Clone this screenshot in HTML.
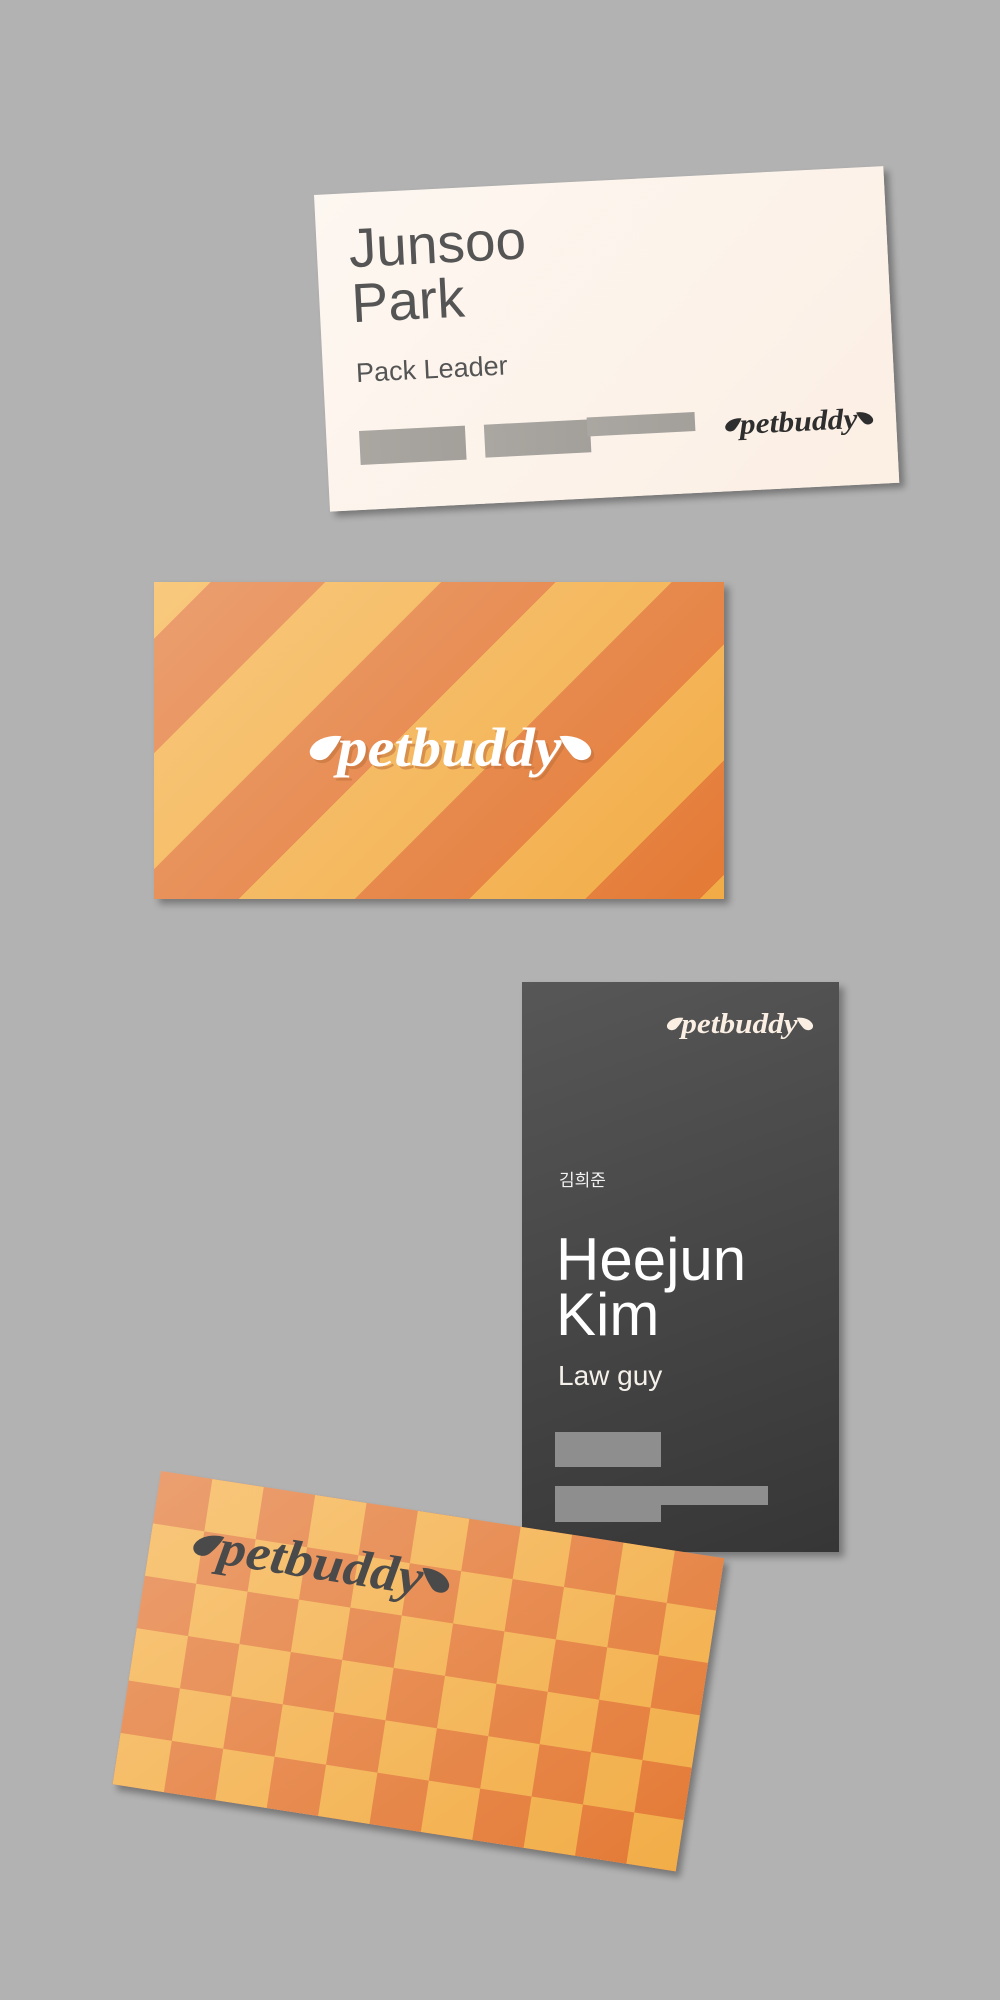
<!DOCTYPE html>
<html><head><meta charset="utf-8"><style>
html,body{margin:0;padding:0}
body{width:1000px;height:2000px;background:#b2b2b2;position:relative;overflow:hidden;font-family:"Liberation Sans","Noto Sans CJK KR",sans-serif}
.card{position:absolute;width:570px;height:317px;box-shadow:5px 5px 7px rgba(0,0,0,.33);transform-origin:0 0;overflow:hidden}
.c1{left:314px;top:195px;transform:rotate(-2.9deg);background:linear-gradient(135deg,#fdf7f1,#fcefe4)}
.c1 .name{position:absolute;left:32px;top:28px;font-size:55px;line-height:55px;color:#555;letter-spacing:0px}
.c1 .role{position:absolute;left:33px;top:165px;font-size:27px;color:#555}
.bar{position:absolute;background:linear-gradient(90deg,#aaa6a1,#a39f9a)}
.c2{left:154px;top:582px;background:linear-gradient(135deg,#f8c97e,#f2ab46)}
.layer{position:absolute;inset:0}
.c2 .dark{background:linear-gradient(135deg,#eb9f70,#e47a35);
 -webkit-mask-image:repeating-linear-gradient(135deg,transparent 0 40px,#000 40px 121px,transparent 121px 163px);
 mask-image:repeating-linear-gradient(135deg,transparent 0 40px,#000 40px 121px,transparent 121px 163px)}
.c3{left:522px;top:982px;width:317px;height:570px;background:linear-gradient(160deg,#575757,#363636)}
.c4{left:161px;top:1471px;transform:rotate(8.8deg);background:linear-gradient(135deg,#eb9f70,#e47a35);z-index:5}
.c4 .light{background:linear-gradient(135deg,#f8c77c,#f2ad47);
 -webkit-mask-image:conic-gradient(#000 0 25%,transparent 0 50%,#000 0 75%,transparent 0);
 mask-image:conic-gradient(#000 0 25%,transparent 0 50%,#000 0 75%,transparent 0);
 -webkit-mask-size:104px 106px;mask-size:104px 106px;-webkit-mask-position:0 0;mask-position:0 0}
.logo{position:absolute;overflow:visible}
</style></head><body>

<svg width="0" height="0" style="position:absolute"><defs>
<g id="lg">
<path d="M34 18 C24 16 6 20 2 32 C0 42 14 46 21 38 C27 31 31 25 34 18Z"/>
<path d="M256 18 C266 16 284 20 288 32 C290 42 276 46 269 38 C263 31 259 25 256 18Z"/>
<text x="30" y="48" font-family="Liberation Serif, serif" font-style="italic" font-weight="bold" font-size="56" textLength="228" lengthAdjust="spacingAndGlyphs">petbuddy</text>
</g></defs></svg>

<div class="card c1">
  <div class="name">Junsoo<br>Park</div>
  <div class="role">Pack Leader</div>
  <div class="bar" style="left:33px;top:238px;width:106px;height:34px"></div>
  <div class="bar" style="left:158px;top:238px;width:106px;height:33px"></div>
  <div class="bar" style="left:261px;top:236px;width:108px;height:19px"></div>
  <svg class="logo" style="left:398px;top:234px" width="150" height="40" viewBox="0 0 290 72" fill="#2e2e2e"><use href="#lg"/></svg>
</div>

<div class="card c2">
  <div class="layer dark"></div>
  <svg class="logo" style="left:154px;top:136px" width="285" height="72" viewBox="0 0 290 72">
    <g fill="#c0703a" opacity=".55" transform="translate(3,3)"><use href="#lg"/></g>
    <g fill="#fff"><use href="#lg"/></g>
  </svg>
</div>

<div class="card c3">
  <svg class="logo" style="left:144px;top:26px" width="148" height="38" viewBox="0 0 290 72" fill="#fbefe4"><use href="#lg"/></svg>
  <div style="position:absolute;left:37px;top:184px;font-size:17px;color:#f2f2f2">김희준</div>
  <div style="position:absolute;left:34px;top:250px;font-size:60px;line-height:55px;color:#fff">Heejun<br>Kim</div>
  <div style="position:absolute;left:36px;top:378px;font-size:28px;color:#f5f0ea">Law guy</div>
  <div class="bar" style="left:33px;top:450px;width:106px;height:35px;background:#8e8e8e"></div>
  <div class="bar" style="left:33px;top:504px;width:213px;height:19px;background:#8e8e8e"></div>
  <div class="bar" style="left:33px;top:520px;width:106px;height:20px;background:#8e8e8e"></div>
</div>

<div class="card c4">
  <div class="layer light"></div>
  <svg class="logo" style="left:42px;top:38px" width="262" height="68" viewBox="0 0 290 72" fill="#4a4a4a"><use href="#lg"/></svg>
</div>

</body></html>
